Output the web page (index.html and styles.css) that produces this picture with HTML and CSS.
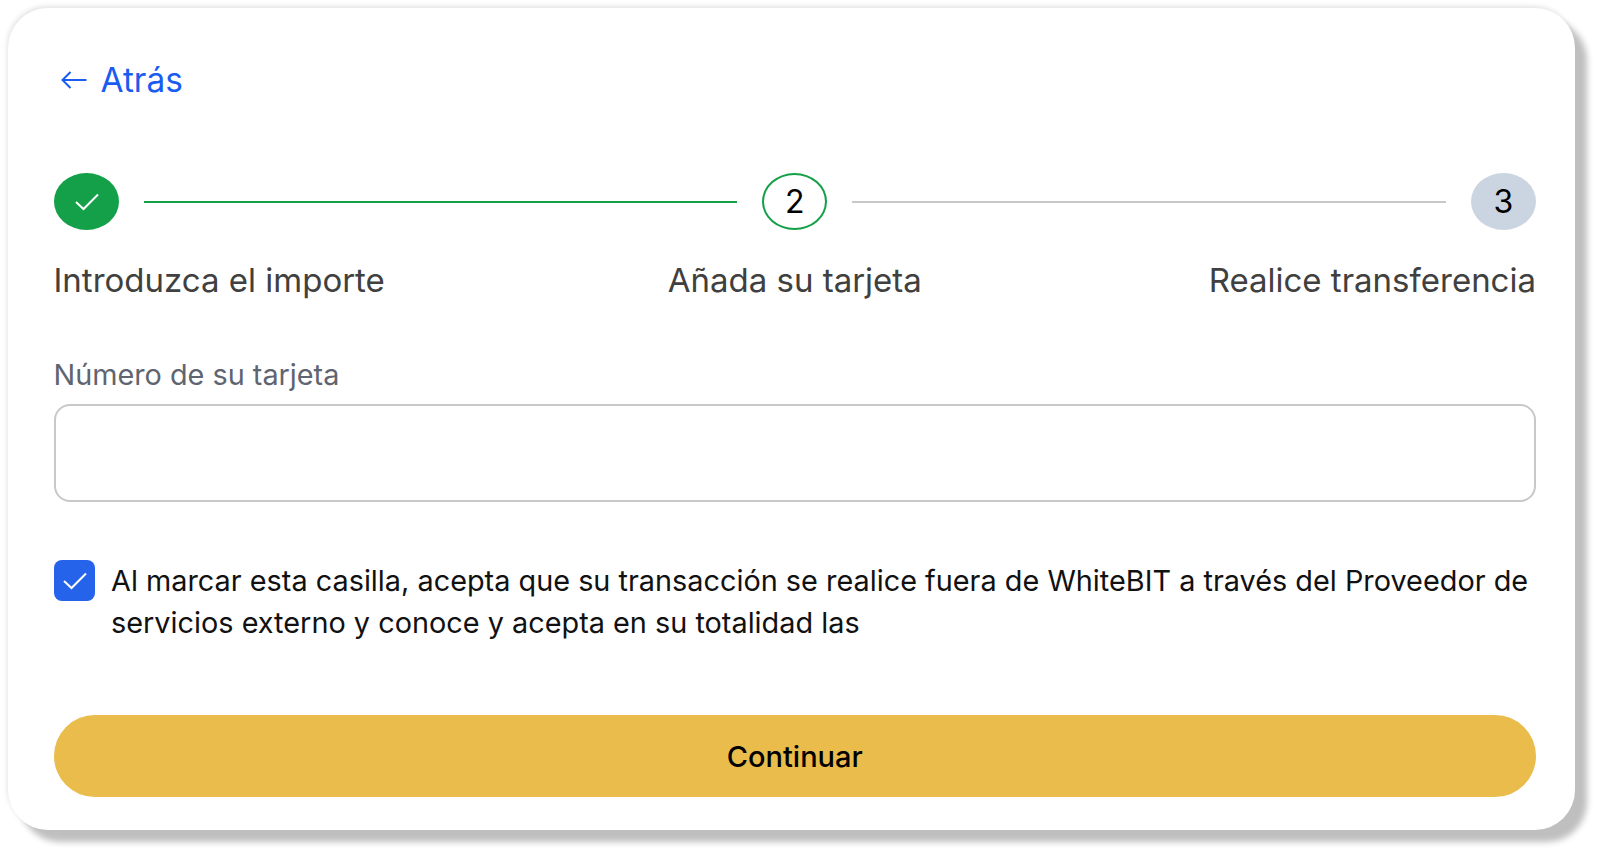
FILE: index.html
```html
<!DOCTYPE html>
<html lang="es">
  <head>
    <meta charset="UTF-8" />
    <title>WhiteBIT</title>
    <link rel="stylesheet" href="styles.css">
  </head>
  <body>
    <div class="card">
      <a class="back" href="#">
        <svg class="back-icon" viewBox="0 0 26 20" fill="none" stroke="currentColor" stroke-width="2">
          <path d="M1.5 10H25.5M9.5 2L1.5 10L9.5 18"/>
        </svg>
        Atrás
      </a>

      <div class="steps">
        <div class="step-circle done">
          <svg class="check" viewBox="0 0 24 18" fill="none" stroke="#fff" stroke-width="2">
            <path d="M1 9L8.5 16L23 1.5"/>
          </svg>
        </div>
        <div class="step-line green"></div>
        <div class="step-circle current">2</div>
        <div class="step-line"></div>
        <div class="step-circle next">3</div>
      </div>

      <div class="step-labels">
        <span>Introduzca el importe</span>
        <span>Añada su tarjeta</span>
        <span class="last">Realice transferencia</span>
      </div>

      <label class="field-label" for="card-number">Número de su tarjeta</label>
      <input class="field" id="card-number" type="text" />

      <div class="agree">
        <div class="checkbox">
          <svg class="check" viewBox="0 0 24 18" fill="none" stroke="#fff" stroke-width="2">
            <path d="M1 9L8.5 16L23 1.5"/>
          </svg>
        </div>
        <p>Al marcar esta casilla, acepta que su transacción se realice fuera de WhiteBIT a través del Proveedor de servicios externo y conoce y acepta en su totalidad las</p>
      </div>

      <button class="continue" type="button">Continuar</button>
    </div>
  </body>
</html>
```

FILE: styles.css
```css
body {
  font-family: Inter, "Liberation Sans", sans-serif;
  margin: 0;
  padding: 8px 25px 25px 8px;
  height: 855px;
  box-sizing: border-box;
  overflow: hidden;
  background-color: #fff;
}

.card {
  height: 822px;
  box-sizing: border-box;
  padding: 52px 39px 0 45.5px;
  background-color: #fff;
  border-radius: 40px;
  box-shadow: 12px 12px 6px #bfbfbf, -1px -2px 5px #e4e4e4;
}

.back {
  display: flex;
  align-items: center;
  gap: 14px;
  height: 40px;
  padding-left: 7px;
  color: #1a5cf0;
  font-size: 33.4px;
  text-decoration: none;
}

.back-icon {
  width: 26px;
  height: 20px;
}

.steps {
  display: flex;
  align-items: center;
  gap: 25px;
  margin-top: 73px;
}

.step-circle {
  display: flex;
  align-items: center;
  justify-content: center;
  flex: none;
  width: 65px;
  height: 57px;
  box-sizing: border-box;
  border-radius: 50%;
  font-size: 32px;
  color: #000;
}

.step-circle.done {
  padding-left: 2px;
  background-color: #13a049;
}

.step-circle.current {
  border: 2px solid #13a049;
}

.step-circle.next {
  background-color: #cbd5e1;
}

.step-line {
  flex: 1;
  height: 2px;
  background-color: #c8c8c8;
}

.step-line.green {
  background-color: #13a049;
}

.check {
  width: 24px;
  height: 18px;
}

.step-labels {
  display: grid;
  grid-template-columns: 1fr auto 1fr;
  margin-top: 30px;
  font-size: 33px;
  line-height: 40px;
  color: #404040;
}

.step-labels .last {
  justify-self: end;
}

.field-label {
  display: block;
  margin-top: 57px;
  font-size: 28.8px;
  line-height: 36px;
  color: #5f6570;
}

.field {
  display: block;
  width: 100%;
  height: 98px;
  margin-top: 11px;
  box-sizing: border-box;
  border: 2px solid #c8c8c8;
  border-radius: 16px;
  background-color: #fff;
}

.agree {
  display: flex;
  gap: 16.5px;
  margin-top: 58px;
}

.checkbox {
  display: flex;
  align-items: center;
  justify-content: center;
  flex: none;
  width: 41px;
  height: 41px;
  padding-left: 2px;
  box-sizing: border-box;
  border-radius: 8px;
  background-color: #2563eb;
}

.agree p {
  margin: 0;
  font-size: 28.85px;
  line-height: 42px;
  color: #111;
}

.continue {
  display: block;
  width: 100%;
  height: 82px;
  margin-top: 71px;
  border: 0;
  border-radius: 41px;
  background-color: #e9bc4b;
  font-family: inherit;
  font-size: 29px;
  font-weight: 500;
  color: #000;
}
```
